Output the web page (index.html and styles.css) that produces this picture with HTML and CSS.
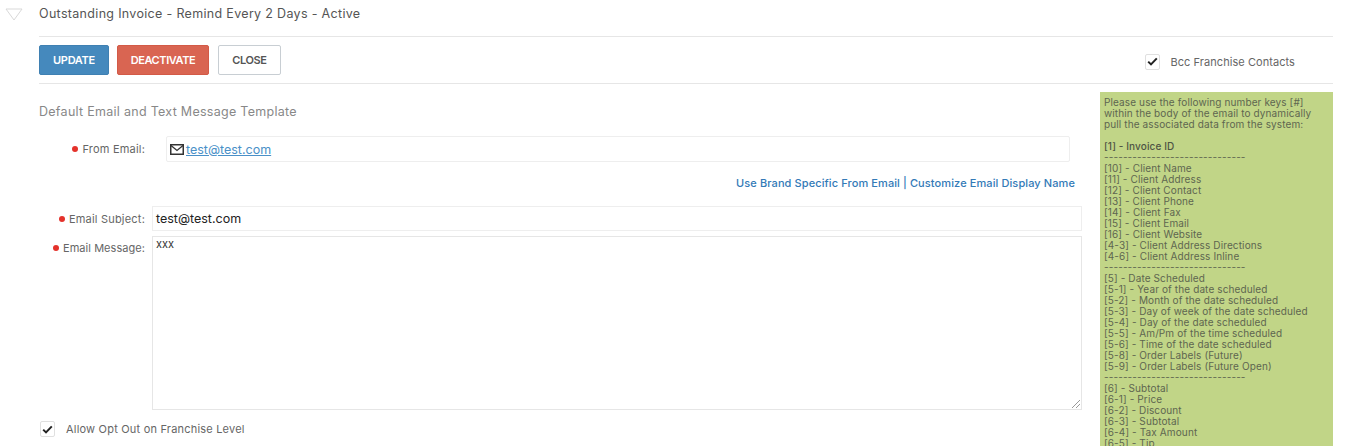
FILE: index.html
```html
<!DOCTYPE html>
<html lang="en">
<head>
<meta charset="utf-8">
<title>Outstanding Invoice</title>
<link rel="stylesheet" href="styles.css">
</head>
<body>
<div class="page">
  <svg class="collapse" width="18" height="13" viewBox="0 0 18 13"><path d="M1 1H17L9 12Z" fill="#fff" stroke="#d9d9d9" stroke-width="1"/></svg>
  <header class="title-row"><h1>Outstanding Invoice - Remind Every 2 Days - Active</h1></header>
  <div class="toolbar">
    <div class="buttons">
      <button class="btn btn-blue">UPDATE</button>
      <button class="btn btn-red">DEACTIVATE</button>
      <button class="btn btn-white">CLOSE</button>
    </div>
    <label class="check check-bcc"><span class="box"><svg width="11" height="9" viewBox="0 0 11 9"><path d="M1.2 4.6 4 7.4 9.8 1.4" fill="none" stroke="#222" stroke-width="2"/></svg></span>Bcc Franchise Contacts</label>
  </div>
  <div class="columns">
    <main class="form">
      <h2>Default Email and Text Message Template</h2>
      <div class="row row-from">
        <div class="label"><i class="dot"></i>From Email:</div>
        <div class="static-field">
          <svg width="14" height="11" viewBox="0 0 14 11"><rect x="0.75" y="0.75" width="12.5" height="9.5" fill="none" stroke="#333" stroke-width="1.5"/><path d="M1 1.5 7 6.5 13 1.5" fill="none" stroke="#333" stroke-width="1.3"/></svg>
          <a href="#">test@test.com</a>
        </div>
      </div>
      <div class="links"><a href="#">Use Brand Specific From Email | Customize Email Display Name</a></div>
      <div class="row row-subject">
        <div class="label"><i class="dot"></i>Email Subject:</div>
        <div class="input">test@test.com</div>
      </div>
      <div class="row row-message">
        <div class="label"><i class="dot"></i>Email Message:</div>
        <div class="textarea">xxx
          <svg class="grip" width="8" height="8" viewBox="0 0 8 8"><path d="M0 8 8 0M4 8 8 4" stroke="#999" stroke-width="1"/></svg>
        </div>
      </div>
      <label class="check check-opt"><span class="box"><svg width="11" height="9" viewBox="0 0 11 9"><path d="M1.2 4.6 4 7.4 9.8 1.4" fill="none" stroke="#222" stroke-width="2"/></svg></span>Allow Opt Out on Franchise Level</label>
    </main>
    <aside class="keys">
<p>Please use the following number keys [#] within the body of the email to dynamically pull the associated data from the system:</p>
<p class="gap"><b>[1] - Invoice ID</b></p>
<p>------------------------------</p>
<p>[10] - Client Name</p>
<p>[11] - Client Address</p>
<p>[12] - Client Contact</p>
<p>[13] - Client Phone</p>
<p>[14] - Client Fax</p>
<p>[15] - Client Email</p>
<p>[16] - Client Website</p>
<p>[4-3] - Client Address Directions</p>
<p>[4-6] - Client Address Inline</p>
<p>------------------------------</p>
<p>[5] - Date Scheduled</p>
<p>[5-1] - Year of the date scheduled</p>
<p>[5-2] - Month of the date scheduled</p>
<p>[5-3] - Day of week of the date scheduled</p>
<p>[5-4] - Day of the date scheduled</p>
<p>[5-5] - Am/Pm of the time scheduled</p>
<p>[5-6] - Time of the date scheduled</p>
<p>[5-8] - Order Labels (Future)</p>
<p>[5-9] - Order Labels (Future Open)</p>
<p>------------------------------</p>
<p>[6] - Subtotal</p>
<p>[6-1] - Price</p>
<p>[6-2] - Discount</p>
<p>[6-3] - Subtotal</p>
<p>[6-4] - Tax Amount</p>
<p>[6-5] - Tip</p>
    </aside>
  </div>
</div>
</body>
</html>
```
FILE: styles.css
```css
* { box-sizing: border-box; }
html, body { margin: 0; height: 446px; overflow: hidden; background: #fff; }
body { font-family: Inter, "Open Sans", sans-serif; color: #666; }
a { color: #337ab7; }
.page { position: relative; width: 1294px; margin-left: 39px; }
.collapse { position: absolute; left: -34px; top: 8px; }
.title-row { height: 37px; border-bottom: 1px solid #e6e6e6; }
h1 { margin: 0; font-size: 12.5px; font-weight: 400; line-height: 28px; color: #555; letter-spacing: 0.32px; }
.toolbar { height: 47px; border-bottom: 1px solid #e6e6e6; display: flex; justify-content: space-between; padding-top: 8px; }
.buttons { display: flex; gap: 8px; align-items: flex-start; }
.btn { height: 30px; border-radius: 2px; font: 600 11px/1 Inter, sans-serif; padding: 0; }
.btn-blue { width: 70px; background: #4589bd; border: 1px solid #3f80b2; color: #fff; letter-spacing: -0.3px; }
.btn-red { width: 92px; background: #d96552; border: 1px solid #d35a47; color: #fff; letter-spacing: -0.4px; }
.btn-white { width: 63px; margin-left: 1px; background: #fff; border: 1px solid #c8ced3; color: #555; letter-spacing: -0.4px; }
.check { display: flex; align-items: center; font-size: 11px; color: #666; letter-spacing: 0.2px; }
.box { width: 15px; height: 16px; border: 1px solid #e0e0e0; border-radius: 2px; display: flex; align-items: center; justify-content: center; flex: none; }
.check-bcc { gap: 11px; margin-right: 38px; align-self: center; margin-top: -5px; letter-spacing: 0.06px; }
.columns { display: flex; gap: 18px; padding-top: 8px; }
.form { width: 1043px; flex: none; }
h2 { margin: 0; font-size: 12.5px; font-weight: 400; line-height: 16px; color: #888; letter-spacing: 0.28px; padding-top: 12px; height: 44px; }
.row { display: flex; }
.label { width: 106px; flex: none; font-size: 11px; text-align: right; color: #666; letter-spacing: 0.2px; }
.dot { display: inline-block; width: 6px; height: 6px; border-radius: 50%; background: #e4322b; margin-right: 4px; vertical-align: 1px; }
.row-from { align-items: center; height: 26px; }
.static-field { margin-left: 21px; width: 904px; height: 26px; border: 1px solid #eee; border-radius: 2px; display: flex; align-items: center; gap: 2px; padding-left: 3px; font-size: 12.5px; }
.static-field a { color: #4a90c8; }
.links { text-align: right; padding-right: 7px; font-size: 11px; font-weight: 500; line-height: 14px; margin-top: 14px; height: 30px; letter-spacing: 0.1px; }
.links a { text-decoration: none; }
.row-subject { height: 25px; align-items: center; margin-bottom: 5px; }
.input { margin-left: 7px; flex: 1; height: 25px; border: 1px solid #eee; padding-left: 3px; font-size: 12.5px; line-height: 23px; color: #222; }
.row-message { height: 174px; }
.row-message .label { padding-top: 5px; line-height: 15px; letter-spacing: 0.05px; }
.textarea { position: relative; margin-left: 7px; flex: 1; border: 1px solid #e6e6e6; padding: 0 3px; font-size: 11px; line-height: 15px; color: #333; }
.grip { position: absolute; right: 1px; bottom: 1px; }
.check-opt { gap: 11px; margin-top: 11px; padding-left: 1px; }
.keys { width: 233px; height: 354px; background: #c1d587; padding: 5px 10px 5px 4px; font-size: 10px; line-height: 11px; color: #5e6650; letter-spacing: 0.12px; overflow: hidden; flex: none; }
.keys p { margin: 0; }
.keys .gap { margin-top: 11px; }
.keys b { font-weight: 500; color: #4e5444; }
```
